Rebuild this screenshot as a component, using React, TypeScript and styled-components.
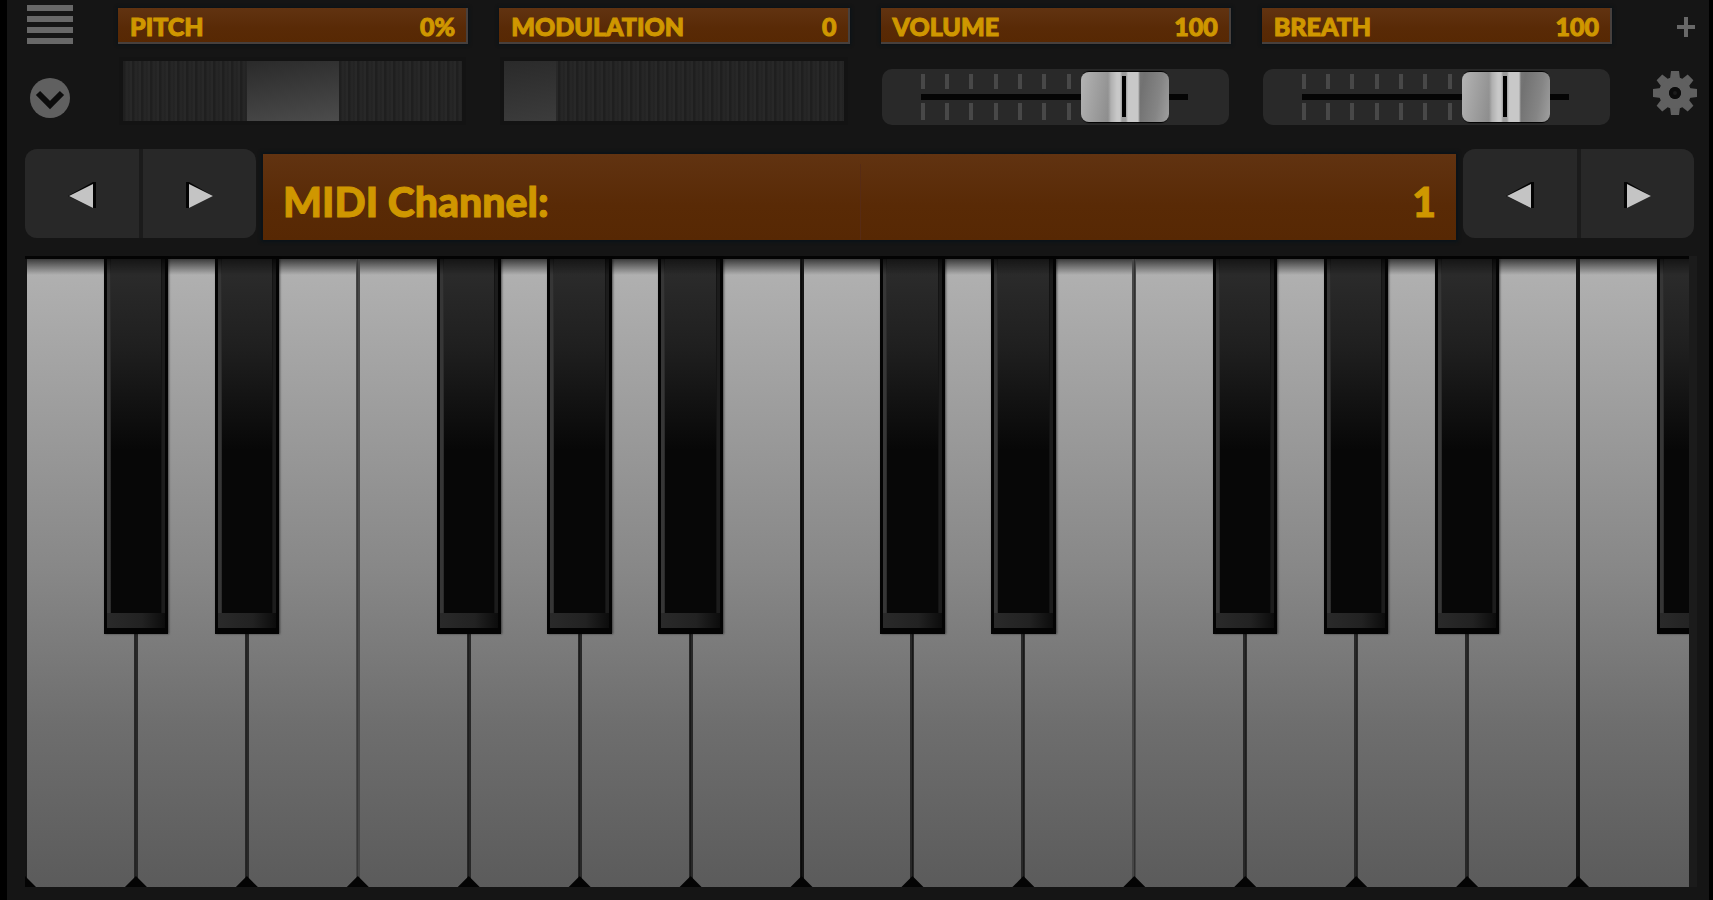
import React from "react";
import styled, { createGlobalStyle, css } from "styled-components";

const GlobalStyle = createGlobalStyle`
  * { box-sizing: border-box; }
  body { margin: 0; background: #000; font-family: Lato, "Liberation Sans", sans-serif; }
  button { border: 0; padding: 0; background: none; font: inherit; cursor: pointer; display: block; }
`;

const Page = styled.div`
  min-height: 100vh;
  display: flex;
  background: #000;
  padding: 0 4px 0 7px;
`;

const Panel = styled.main`
  flex: 1;
  min-width: 0;
  display: flex;
  flex-direction: column;
  background: #151515;
  padding-bottom: 13px;
`;

const Header = styled.header`
  display: flex;
  padding: 4px 12px 0 20px;
  height: 149px;
`;

const Tools = styled.div<{ $align: string }>`
  display: flex;
  flex-direction: column;
  align-items: ${(p) => p.$align};
  svg { display: block; }
`;

const MenuButton = styled.button`
  margin-bottom: 33px;
`;

const PlusButton = styled.button`
  margin: 12px 0 32px;
`;

const Controls = styled.div`
  flex: 1;
  display: grid;
  grid-template-columns: repeat(4, 1fr);
  gap: 31px;
  margin: 4px 41px 0 45px;
`;

const Control = styled.div`
  min-width: 0;
`;

const lcd = css`
  color: #cf9700;
  font-weight: 900;
  -webkit-text-stroke: 1px #cf9700;
  background: linear-gradient(#613311, #592a06 60%, #572803);
`;

const Readout = styled.div`
  ${lcd}
  display: flex;
  justify-content: space-between;
  align-items: center;
  height: 36px;
  padding: 1px 11px 0 12px;
  font-size: 25px;
  line-height: 32px;
  border: solid #47403d;
  border-width: 0 2px 2px 0;
  box-shadow: 0 0 3px 1px #0a1318;
`;

const Wheel = styled.input<{ $thumb: number; $glow: string }>`
  appearance: none;
  display: block;
  width: calc(100% - 11px);
  height: 60px;
  margin: 17px 0 0 5px;
  background: repeating-linear-gradient(90deg, #1f1f1f 0 2px, #262626 3px 5px, #212121 6px, #282828 7px 9px);
  box-shadow: 0 0 0 4px #131313;

  &::-webkit-slider-thumb {
    appearance: none;
    width: ${(p) => p.$thumb}px;
    height: 60px;
    background: linear-gradient(170deg, #2a2a2a, ${(p) => p.$glow});
  }
`;

const SliderBox = styled.div`
  display: grid;
  align-items: center;
  height: 56px;
  margin: 25px 2px 0 1px;
  padding-right: 6px;
  border-radius: 10px;
  background: linear-gradient(#050505, #050505) 39px 25px / calc(100% - 80px) 6px no-repeat, #292929;
  > * { grid-area: 1 / 1; }
`;

const Ticks = styled.div`
  display: grid;
  grid-template-columns: repeat(7, 4px);
  grid-template-rows: 15px 17px;
  justify-content: space-between;
  row-gap: 14px;
  width: 44%;
  margin-left: 39px;
  i { background: #484848; }
`;

const Slider = styled.input`
  appearance: none;
  width: 100%;
  height: 56px;
  margin: 0;
  background: none;

  &::-webkit-slider-thumb {
    appearance: none;
    width: 88px;
    height: 50px;
    border-radius: 8px;
    box-shadow: 0 -2px 1px -1px #000, 0 2px 1px -1px #000;
    background:
      linear-gradient(#000, #000) 41px 4px / 4px 41px no-repeat,
      linear-gradient(90deg, transparent 27px, #b0b0b0 30px, #c8c8c8 36px 39px, #9c9c9c 41px 45px, #c8c8c8 47px 57px, transparent 59px),
      linear-gradient(100deg, #b4b4b4, #929292 32%, #727272 66%, #858585 85%, #a0a0a0);
  }
`;

const NavRow = styled.div`
  display: flex;
  align-items: flex-start;
  gap: 7px;
  padding: 0 15px 0 18px;
`;

const NavGroup = styled.div`
  display: flex;
  gap: 4px;
  width: 231px;
  height: 89px;
  border-radius: 12px;
  overflow: hidden;
  background: #1b1b1b;
`;

const NavButton = styled.button`
  flex: 1;
  display: grid;
  place-items: center;
  padding-top: 4px;
  background: #282828;
`;

const Display = styled.div`
  ${lcd}
  flex: 1;
  display: grid;
  grid-template-columns: 1fr 1fr;
  height: 86px;
  margin-top: 5px;
  padding-top: 10px;
  font-size: 41px;
  line-height: 76px;
  box-shadow: 0 0 3px 2px #0a1318;
`;

const DisplayHalf = styled.span<{ $end?: boolean }>`
  padding: 0 20px;
  text-align: ${(p) => (p.$end ? "right" : "left")};
  border-left: ${(p) => (p.$end ? "1px solid #572b14" : "0")};
`;

const Keyboard = styled.section`
  position: relative;
  flex: 1;
  min-height: 360px;
  display: grid;
  grid-template-columns: repeat(15, 1fr);
  margin: 16px 20px 0 18px;
  padding-top: 3px;
  background: #040404;
  box-shadow: 8px 0 0 #1b1b1b;
`;

const KeySlot = styled.div`
  position: relative;
  min-width: 0;
  &:last-child { overflow: hidden; }
`;

const WhiteKey = styled.button<{ $left: string; $right: string; $last: boolean }>`
  width: 100%;
  height: 100%;
  border: solid transparent;
  border-left-color: ${(p) => p.$left};
  border-right-color: ${(p) => p.$right};
  border-width: 0 ${(p) => (p.$last ? 0 : 2)}px 0 2px;
  background: linear-gradient(#000a, #0000 16px),
    linear-gradient(#b2b2b2, #989898 30%, #878787 50%, #6e6e6e 74%, #5b5b5b);
  background-origin: border-box;
  clip-path: polygon(0 0, 100% 0, ${(p) => (p.$last ? "100% 100%" : "100% calc(100% - 11px), calc(100% - 11px) 100%")}, 11px 100%, 0 calc(100% - 11px));
`;

const BlackKey = styled.button`
  position: absolute;
  z-index: 1;
  top: 0;
  left: 71%;
  width: 58%;
  height: calc(60% - 2px);
  padding: 0 3px 6px;
  background: #030303;
  box-shadow: 1px 0 2px #0008;
`;

const BlackFace = styled.span`
  display: block;
  height: 100%;
  padding: 0 4px 15px;
  background:
    linear-gradient(#000a, #0000 16px),
    linear-gradient(90deg, #2a2a2a, #222 60%, #0c0c0c) 0 100% / 100% 15px no-repeat,
    linear-gradient(90deg, #363636 0 3px, #0c0c0c 5px calc(100% - 4px), #1c1c1c calc(100% - 3px));

  &::before {
    content: "";
    display: block;
    height: 100%;
    background: linear-gradient(#0008, #0000 16px), linear-gradient(#2d2d2d, #1f1f1f 25%, #070707 54%);
  }
`;

const NOTES = ["C", "D", "E", "F", "G", "A", "B"];
const SHARPS = ["C", "D", "F", "G", "A"];

// Colour of the gap on the left of key i: the E-F gaps are lighter than the B-C gaps.
function gapColour(i: number) {
  if (i % 7 === 3) return "#464646";
  if (i % 7 === 0) return "#141414";
  return "#282828";
}

function Arrow({ left }: { left?: boolean }) {
  return (
    <svg width="32" height="32" viewBox="0 0 32 32" aria-hidden="true">
      {left ? (
        <>
          <path d="M2 16 27 2h3v26h-3Z" fill="#030303" />
          <path d="M3 16 27 4v24Z" fill="#c4c4c4" />
        </>
      ) : (
        <>
          <path d="M30 16 6 2H3v26h3Z" fill="#030303" />
          <path d="M30 16 6 4v24Z" fill="#c4c4c4" />
        </>
      )}
    </svg>
  );
}

function GearIcon() {
  return (
    <svg width="44" height="46" viewBox="-22 -23 44 46" aria-hidden="true">
      <g fill="#606060">
        {[0, 45, 90, 135, 180, 225, 270, 315].map((a) => (
          <path key={a} d="M-5-14-4-22H4L5-14Z" transform={`rotate(${a})`} />
        ))}
      </g>
      <circle r="11" fill="none" stroke="#606060" strokeWidth="10" />
      <circle r="6" fill="#0c0c0c" />
      <circle r="2" fill="#1c1c1c" />
    </svg>
  );
}

function Stepper({ name }: { name: string }) {
  return (
    <NavGroup>
      <NavButton aria-label={`Previous ${name}`}><Arrow left /></NavButton>
      <NavButton aria-label={`Next ${name}`}><Arrow /></NavButton>
    </NavGroup>
  );
}

function Meter({ id, label, value, children }: { id: string; label: string; value: string; children: React.ReactNode }) {
  return (
    <Control>
      <Readout>
        <label htmlFor={id}>{label}</label>
        <output htmlFor={id}>{value}</output>
      </Readout>
      {children}
    </Control>
  );
}

function Fader({ id, value, onChange }: { id: string; value: number; onChange: (v: number) => void }) {
  return (
    <SliderBox>
      <Ticks>{Array.from({ length: 14 }, (_, i) => <i key={i} />)}</Ticks>
      <Slider id={id} type="range" min={0} max={127} value={value} onChange={(e) => onChange(+e.target.value)} />
    </SliderBox>
  );
}

export default function App() {
  const [pitch, setPitch] = React.useState(0);
  const [mod, setMod] = React.useState(0);
  const [volume, setVolume] = React.useState(100);
  const [breath, setBreath] = React.useState(100);

  return (
    <>
      <GlobalStyle />
      <Page>
        <Panel>
          <Header>
            <Tools $align="center">
              <MenuButton aria-label="Menu">
                <svg width="46" height="41" viewBox="0 0 46 41">
                  <path d="M0 4h46M0 15h46M0 26h46M0 37h46" stroke="#686868" strokeWidth="6" />
                </svg>
              </MenuButton>
              <button aria-label="Collapse">
                <svg width="40" height="40" viewBox="0 0 40 40">
                  <circle cx="20" cy="20" r="20" fill="#606060" />
                  <path d="M8 15 20 27 32 15" fill="none" stroke="#0c0c0c" strokeWidth="6" />
                </svg>
              </button>
            </Tools>
            <Controls>
              <Meter id="pitch" label="PITCH" value={`${pitch}%`}>
                <Wheel id="pitch" type="range" min={-100} max={100} value={pitch} $thumb={92} $glow="#4c4c4c" onChange={(e) => setPitch(+e.target.value)} />
              </Meter>
              <Meter id="modulation" label="MODULATION" value={`${mod}`}>
                <Wheel id="modulation" type="range" min={0} max={127} value={mod} $thumb={52} $glow="#3c3c3c" onChange={(e) => setMod(+e.target.value)} />
              </Meter>
              <Meter id="volume" label="VOLUME" value={`${volume}`}>
                <Fader id="volume" value={volume} onChange={setVolume} />
              </Meter>
              <Meter id="breath" label="BREATH" value={`${breath}`}>
                <Fader id="breath" value={breath} onChange={setBreath} />
              </Meter>
            </Controls>
            <Tools $align="flex-end">
              <PlusButton aria-label="Add">
                <svg width="20" height="22" viewBox="0 0 20 22">
                  <path d="M0 11h18M9 1v20" stroke="#686868" strokeWidth="4" />
                </svg>
              </PlusButton>
              <button aria-label="Settings"><GearIcon /></button>
            </Tools>
          </Header>
          <NavRow>
            <Stepper name="setting" />
            <Display>
              <DisplayHalf>MIDI Channel:</DisplayHalf>
              <DisplayHalf $end>1</DisplayHalf>
            </Display>
            <Stepper name="value" />
          </NavRow>
          <Keyboard aria-label="Piano keyboard">
            {Array.from({ length: 15 }, (_, i) => {
              const note = NOTES[i % 7];
              const octave = 3 + Math.floor(i / 7);
              return (
                <KeySlot key={i}>
                  <WhiteKey
                    aria-label={`${note}${octave}`}
                    $left={gapColour(i)}
                    $right={gapColour(i + 1)}
                    $last={i === 14}
                  />
                  {SHARPS.includes(note) && (
                    <BlackKey aria-label={`${note} sharp ${octave}`}><BlackFace /></BlackKey>
                  )}
                </KeySlot>
              );
            })}
          </Keyboard>
        </Panel>
      </Page>
    </>
  );
}
